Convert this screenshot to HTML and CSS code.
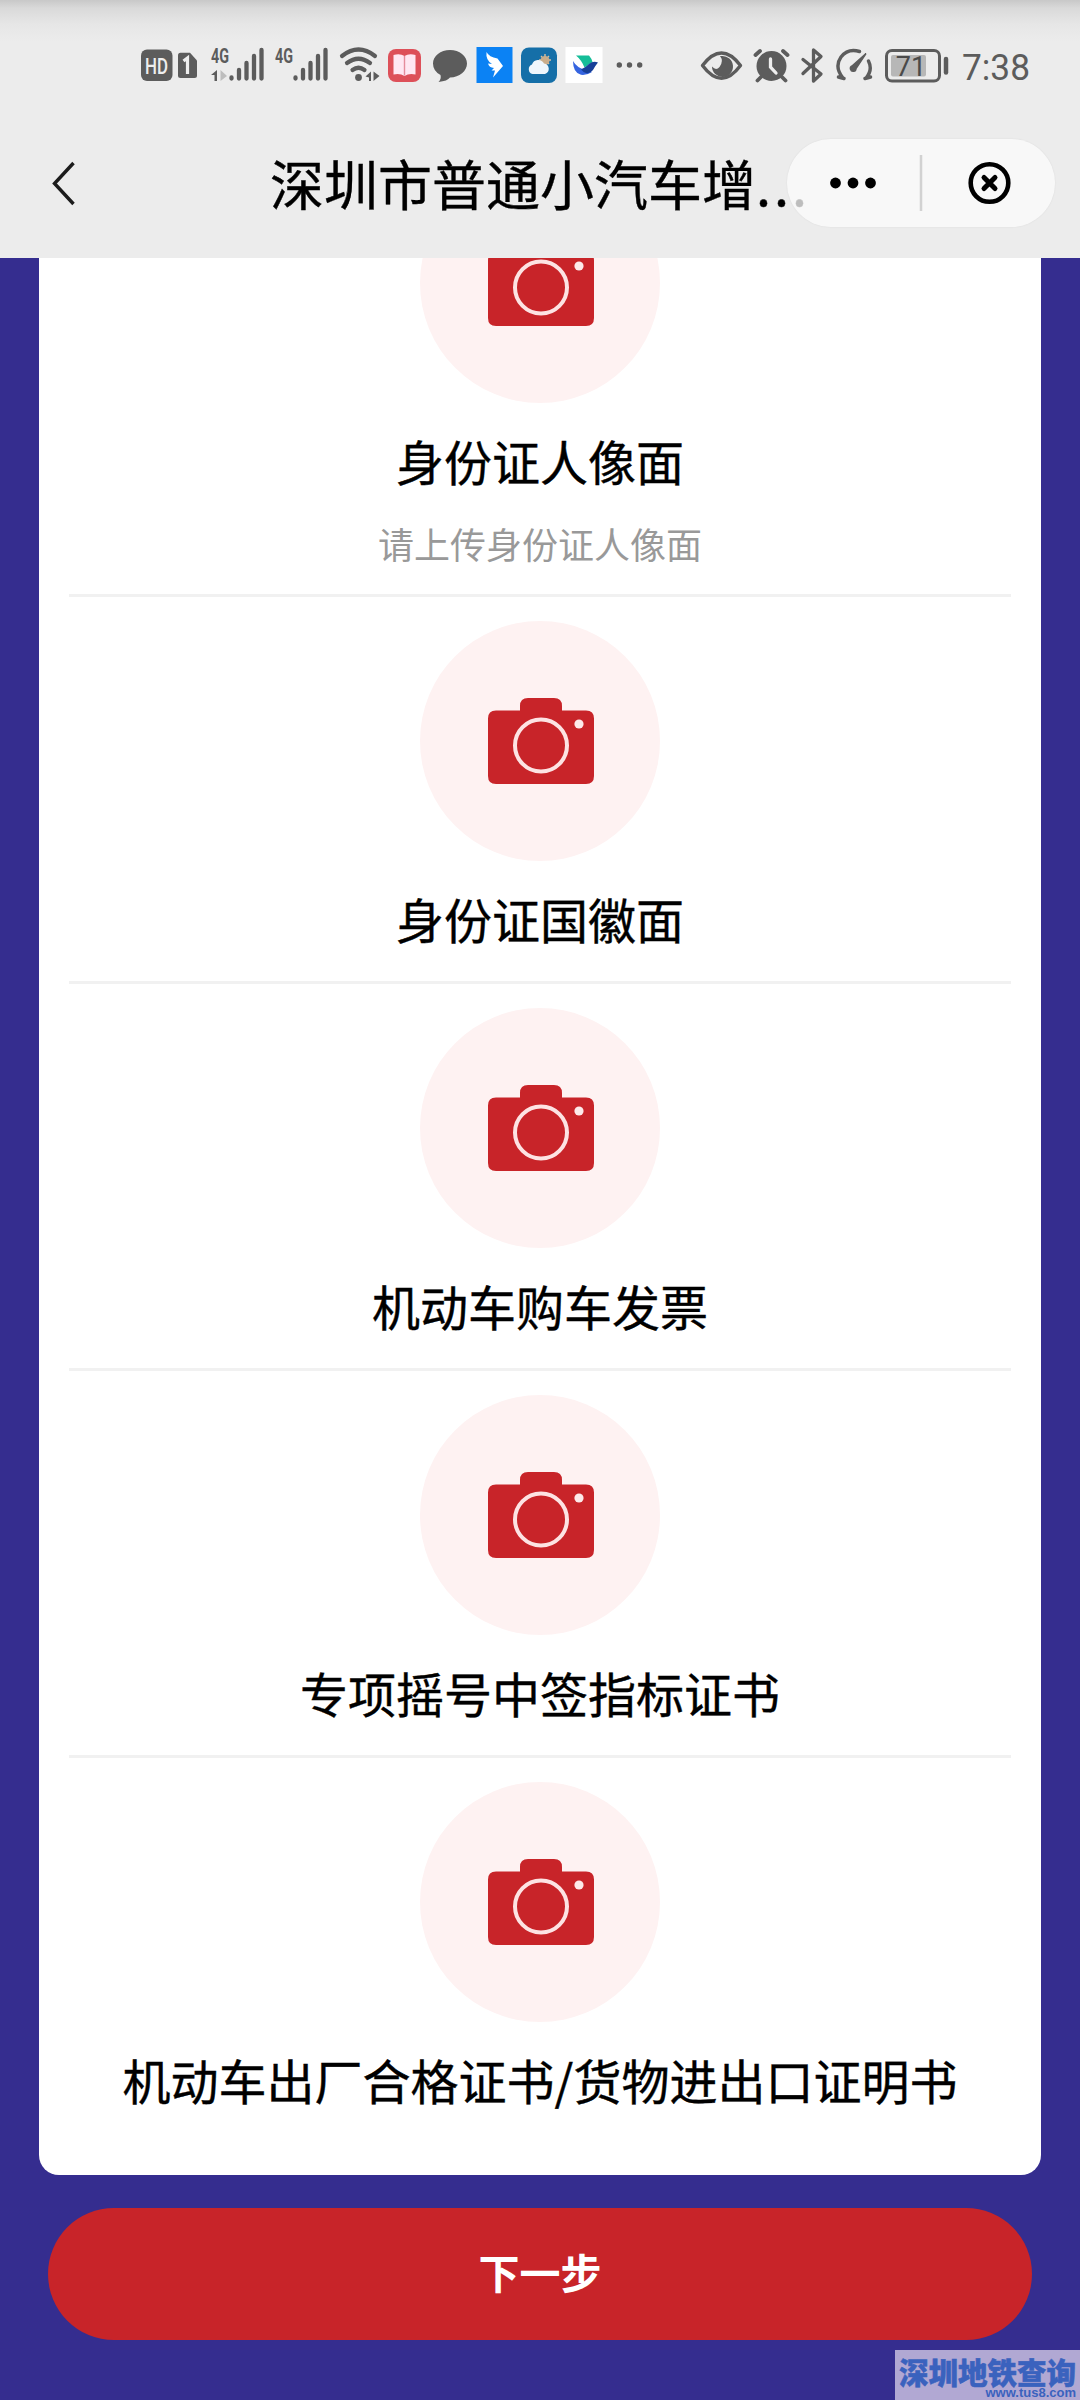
FILE: index.html
```
<!DOCTYPE html>
<html lang="zh-CN">
<head>
<meta charset="utf-8">
<title>深圳市普通小汽车增量</title>
<link rel="stylesheet" href="styles.css">
</head>
<body>
<svg class="defs" width="0" height="0">
  <symbol id="camera" viewBox="0 0 106 86">
    <path fill="#c82429" d="M8 12.500H32V8Q32 0 40 0H66Q74 0 74 8V12.500H98Q106 12.500 106 20.500V78Q106 86 98 86H8Q0 86 0 78V20.500Q0 12.500 8 12.500Z"/>
    <circle cx="53" cy="47.500" r="26" fill="none" stroke="#fde3e3" stroke-width="4"/>
    <circle cx="91" cy="26" r="4.600" fill="#fdeaea"/>
  </symbol>
</svg>
<div class="screen">
  <header class="top">
    <div class="status">
      <div class="status-group">
        <svg width="37" height="70" viewBox="138 30 37 70"><rect x="141" y="49.500" width="31.500" height="31.500" rx="6" fill="#5c5c5c"/><text x="156.500" y="73.500" text-anchor="middle" class="t-hd" textLength="23" lengthAdjust="spacingAndGlyphs">HD</text></svg>
        <svg width="33" height="70" viewBox="175 30 33 70"><path d="M180.500 52.700H190L197 60.500V75.500Q197 78 194.500 78H180.500Q178 78 178 75.500V55.200Q178 52.700 180.500 52.700Z" fill="#5c5c5c"/><path d="M183.500 61L187.500 58V74" fill="none" stroke="#eee" stroke-width="3.200"/></svg>
        <svg width="64" height="70" viewBox="208 30 64 70"><text x="211" y="62.500" class="t-4g" textLength="18" lengthAdjust="spacingAndGlyphs">4G</text><g stroke="#5c5c5c" stroke-width="4.300" stroke-linecap="round"><path d="M231.500 77.500V78.500M239 70V78.500M246.500 63V78.500M254 56V78.500M261.500 50V78.500"/></g><path d="M211 75L217 70V81H214.500V75Z" fill="#5c5c5c"/><path d="M220.500 70L227 76L220.500 81Z" fill="#bdbdbd"/></svg>
        <svg width="64" height="70" viewBox="273 30 64 70"><text x="276" y="62.500" class="t-4g" textLength="18" lengthAdjust="spacingAndGlyphs">4G</text><g stroke="#5c5c5c" stroke-width="4.300" stroke-linecap="round"><path d="M296.500 77.500V78.500M304 70V78.500M311.500 63V78.500M319 56V78.500M326.500 50V78.500"/></g></svg>
        <svg width="48" height="70" viewBox="336 30 48 70"><g fill="none" stroke="#5c5c5c" stroke-width="4.200" stroke-linecap="round"><path d="M342 56Q358.500 43 375 56M347 63Q358.500 54.500 370 63M352.500 70Q358.500 65.500 364.500 70"/></g><circle cx="358.500" cy="77.500" r="3.400" fill="#5c5c5c"/><path d="M365.500 76.500L371 71.500V81H369V77.500ZM373.500 71.500L379.500 76L373.500 81Z" fill="#5c5c5c"/></svg>
        <svg width="42" height="70" viewBox="384 30 42 70"><rect x="388" y="49" width="33" height="33" rx="8" fill="#dd5059"/><path d="M393.500 55Q400 53 404.500 56Q409 53 415.500 55V74.500Q409 73 404.500 76Q400 73 393.500 74.500Z" fill="#ffe7f2"/><path d="M404.500 56V75.500" stroke="#e58c9c" stroke-width="1.400"/></svg>
        <svg width="46" height="70" viewBox="426 30 46 70"><path d="M450 50C459.500 50 467 56 467 63.500S459.500 77.500 450 77.500Q447.500 81 438.500 82Q441.500 79 440.500 75Q433 71 433 63.500C433 56 440.500 50 450 50Z" fill="#5c5c5c"/></svg>
        <svg width="45" height="70" viewBox="472 30 45 70"><rect x="476.500" y="47" width="36" height="36" fill="#0b82f4"/><path d="M486.500 52Q489 57 497.500 58.500L503 66L493 77.500L495 70.500H491.500L494 68Q489 67.500 488 63.500L492 64Q485.500 60 486.500 52Z" fill="#fff"/></svg>
        <svg width="45" height="70" viewBox="517 30 45 70"><rect x="521" y="47.500" width="36" height="35.500" rx="8" fill="#156fa8"/><g stroke="#d9c0a0" stroke-width="1.400"><path d="M545 54V66M539 60H551M541 56L549 64M549 56L541 64"/></g><circle cx="545" cy="60.500" r="4.500" fill="#c9ad8b"/><path d="M532.500 74A5 5 0 0 1 532 64.500A6.500 6.500 0 0 1 544 63.500A5.400 5.400 0 0 1 545 74Z" fill="#eef6fc"/></svg>
        <svg width="45" height="70" viewBox="562 30 45 70"><rect x="565.500" y="47" width="37" height="36" fill="#fff"/><path d="M576 55.500H589Q592 59 592.500 62L584.500 67.500Q581.500 60 576 55.500Z" fill="#15bd98"/><path d="M573 61Q577 68 585 69.500L592 72Q587 75.500 581 74.800Q573 73 573 61Z" fill="#3564e0"/><path d="M581 69.500Q586 67 589 64Q593 60.500 598 62.500Q595 66 593 70Q590 74 586 73Q583 72 581 69.500Z" fill="#173f98"/></svg>
        <svg width="43" height="70" viewBox="607 30 43 70"><g fill="#5c5c5c"><circle cx="619.300" cy="65" r="2.700"/><circle cx="629.500" cy="65" r="2.700"/><circle cx="639.700" cy="65" r="2.700"/></g></svg>
      </div>
      <div class="status-group">
        <svg width="52" height="70" viewBox="696 30 52 70"><path d="M702.500 65.500Q721.500 40.500 740.500 65.500Q721.500 91 702.500 65.500Z" fill="none" stroke="#5c5c5c" stroke-width="3.400" stroke-linejoin="round"/><path d="M721.500 56A10.500 10.500 0 1 1 712 66.500Q716 71 719.500 67Q724 61 720 56Z" fill="#5c5c5c"/></svg>
        <svg width="50" height="70" viewBox="748 30 50 70"><circle cx="771.500" cy="66" r="15" fill="#5c5c5c"/><path d="M761 77L757.500 80.500M782 77L785.500 80.500M755.500 55L760 51M787.500 55L783 51" stroke="#5c5c5c" stroke-width="3.800" stroke-linecap="round"/><path d="M770.500 59V67L776 73" fill="none" stroke="#eee" stroke-width="3.300" stroke-linecap="round"/></svg>
        <svg width="34" height="70" viewBox="798 30 34 70"><path d="M803 59.500L821 74L813.500 81V50L821 56.500L803 73.500" fill="none" stroke="#5c5c5c" stroke-width="3.300" stroke-linejoin="round" stroke-linecap="round"/></svg>
        <svg width="48" height="70" viewBox="832 30 48 70"><path d="M843 78Q834 67 841 57Q848 48 859.500 51.500M868.500 61Q873 70 866 78M838.500 77L844 78.500M870.500 77L865 78.500" fill="none" stroke="#5c5c5c" stroke-width="3.400" stroke-linecap="round"/><path d="M866 53.500L856 68.500A2.800 2.800 0 1 1 852 66Z" fill="#5c5c5c" stroke="#5c5c5c" stroke-width="1.500"/></svg>
        <svg width="76" height="70" viewBox="880 30 76 70"><rect x="886.500" y="50.500" width="53" height="30.500" rx="5.500" fill="none" stroke="#5c5c5c" stroke-width="3"/><rect x="891" y="55" width="35" height="21.500" rx="2" fill="#b7b7b7"/><path d="M946 59V72.500" stroke="#5c5c5c" stroke-width="4.500" stroke-linecap="round"/><text x="911" y="76" text-anchor="middle" class="t-bat">71</text></svg>
        <svg width="76" height="70" viewBox="956 30 76 70"><text x="962" y="80" class="t-time" textLength="68" lengthAdjust="spacingAndGlyphs">7:38</text></svg>
      </div>
    </div>
    <nav class="nav">
      <svg class="back" width="30" height="50" viewBox="0 0 30 50"><path d="M24.500 5L5.500 25.500L24.500 46" fill="none" stroke="#1c1c1c" stroke-width="3.400"/></svg>
      <h1 class="title">深圳市普通小汽车增<span class="ellipsis">...</span></h1>
      <div class="capsule">
        <svg width="268" height="88" viewBox="0 0 268 88"><g fill="#000"><circle cx="48.500" cy="44" r="5.400"/><circle cx="66" cy="44" r="5.400"/><circle cx="83.500" cy="44" r="5.400"/></g><path d="M134 16V72" stroke="#d2d2d2" stroke-width="2.500"/><circle cx="202.500" cy="44" r="18.800" fill="none" stroke="#000" stroke-width="4.600"/><path d="M197 38.500L208 49.500M208 38.500L197 49.500" stroke="#000" stroke-width="5" stroke-linecap="round"/></svg>
      </div>
    </nav>
  </header>
  <main class="content">
    <section class="card">
      <div class="item"><div class="disc"><svg class="cam"><use href="#camera"/></svg></div><p class="label">身份证人像面</p><p class="hint">请上传身份证人像面</p></div>
      <div class="item"><div class="disc"><svg class="cam"><use href="#camera"/></svg></div><p class="label">身份证国徽面</p></div>
      <div class="item"><div class="disc"><svg class="cam"><use href="#camera"/></svg></div><p class="label">机动车购车发票</p></div>
      <div class="item"><div class="disc"><svg class="cam"><use href="#camera"/></svg></div><p class="label">专项摇号中签指标证书</p></div>
      <div class="item"><div class="disc"><svg class="cam"><use href="#camera"/></svg></div><p class="label">机动车出厂合格证书/货物进出口证明书</p></div>
    </section>
    <button class="next">下一步</button>
  </main>
  <div class="watermark"><span class="wm-name">深圳地铁查询</span><span class="wm-url">www.tus8.com</span></div>
</div>
</body>
</html>
```
FILE: styles.css
```
* { box-sizing: border-box; }
body {
  margin: 0;
  font-family: "Noto Sans CJK SC", "Noto Sans", sans-serif;
  color: #000;
}
p, h1 { margin: 0; }
svg { display: block; flex: none; }
.defs { position: absolute; }
.screen {
  position: relative;
  display: flex;
  flex-direction: column;
  width: 1080px;
  height: 2400px;
  overflow: hidden;
  background: #352d8f;
}
.top {
  flex: none;
  height: 258px;
  background: linear-gradient(#c8c8c8, #d9d9d9 8px, #e6e6e6 24px, #ececec 42px);
}
.status {
  display: flex;
  justify-content: space-between;
  height: 130px;
  padding: 30px 48px 30px 138px;
}
.status-group { display: flex; }
.t-hd { font: 500 22px Roboto, sans-serif; fill: #eee; }
.t-4g { font: 700 20px Roboto, sans-serif; fill: #5c5c5c; }
.t-bat { font: 400 27px Roboto, sans-serif; fill: #4a4a4a; }
.t-time { font: 400 36px Roboto, sans-serif; fill: #5c5c5c; }
.nav {
  display: flex;
  align-items: center;
  height: 106px;
  padding: 0 25px 0 49px;
}
.title {
  margin-left: 191px;
  width: 517px;
  font-size: 54px;
  font-weight: 400;
  line-height: 80px;
  white-space: nowrap;
  -webkit-text-stroke: .4px #000;
}
.ellipsis { letter-spacing: 3px; }
.capsule {
  position: relative;
  width: 268px;
  height: 88px;
  border-radius: 44px;
  background: rgba(252, 252, 252, .75);
  box-shadow: 0 0 2px rgba(0, 0, 0, .08);
}
.content {
  flex: 1;
  min-height: 0;
  display: flex;
  flex-direction: column;
  justify-content: flex-end;
  align-items: center;
  gap: 33px;
  padding-bottom: 60px;
  overflow: hidden;
}
.card {
  flex: none;
  width: 1002px;
  padding: 0 30px 36px;
  border-radius: 20px;
  background: #fff;
}
.item {
  display: flex;
  flex-direction: column;
  align-items: center;
  padding: 24px 0 27px;
  border-bottom: 3px solid #f1f1f1;
}
.item:last-child { padding-bottom: 24px; border-bottom: 0; }
.disc {
  width: 240px;
  height: 240px;
  margin-bottom: 21px;
  padding: 77px 66px 77px 68px;
  border-radius: 50%;
  background: #fef2f2;
}
.cam { width: 106px; height: 86px; }
.label {
  font-size: 48px;
  line-height: 72px;
  white-space: nowrap;
  -webkit-text-stroke: .4px #000;
}
.hint { margin-top: 23px; font-size: 36px; line-height: 48px; color: #999; }
.next {
  flex: none;
  width: 984px;
  height: 132px;
  padding: 0 0 6px;
  border: 0;
  border-radius: 66px;
  background: #c82429;
  color: #fff;
  font: 700 41px/126px "Noto Sans CJK SC", sans-serif;
}
.watermark {
  position: absolute;
  right: 0;
  bottom: 0;
  display: flex;
  flex-direction: column;
  align-items: flex-end;
  width: 185px;
  height: 50px;
  padding: 5px 4px 0 0;
  background: #b1a8d3;
  color: #3a62be;
}
.wm-name {
  font-size: 29.500px;
  font-weight: 900;
  line-height: 32px;
  white-space: nowrap;
  -webkit-text-stroke: .5px #3a62be;
}
.wm-url { font: 700 13px/12px "Liberation Sans", sans-serif; }
```
